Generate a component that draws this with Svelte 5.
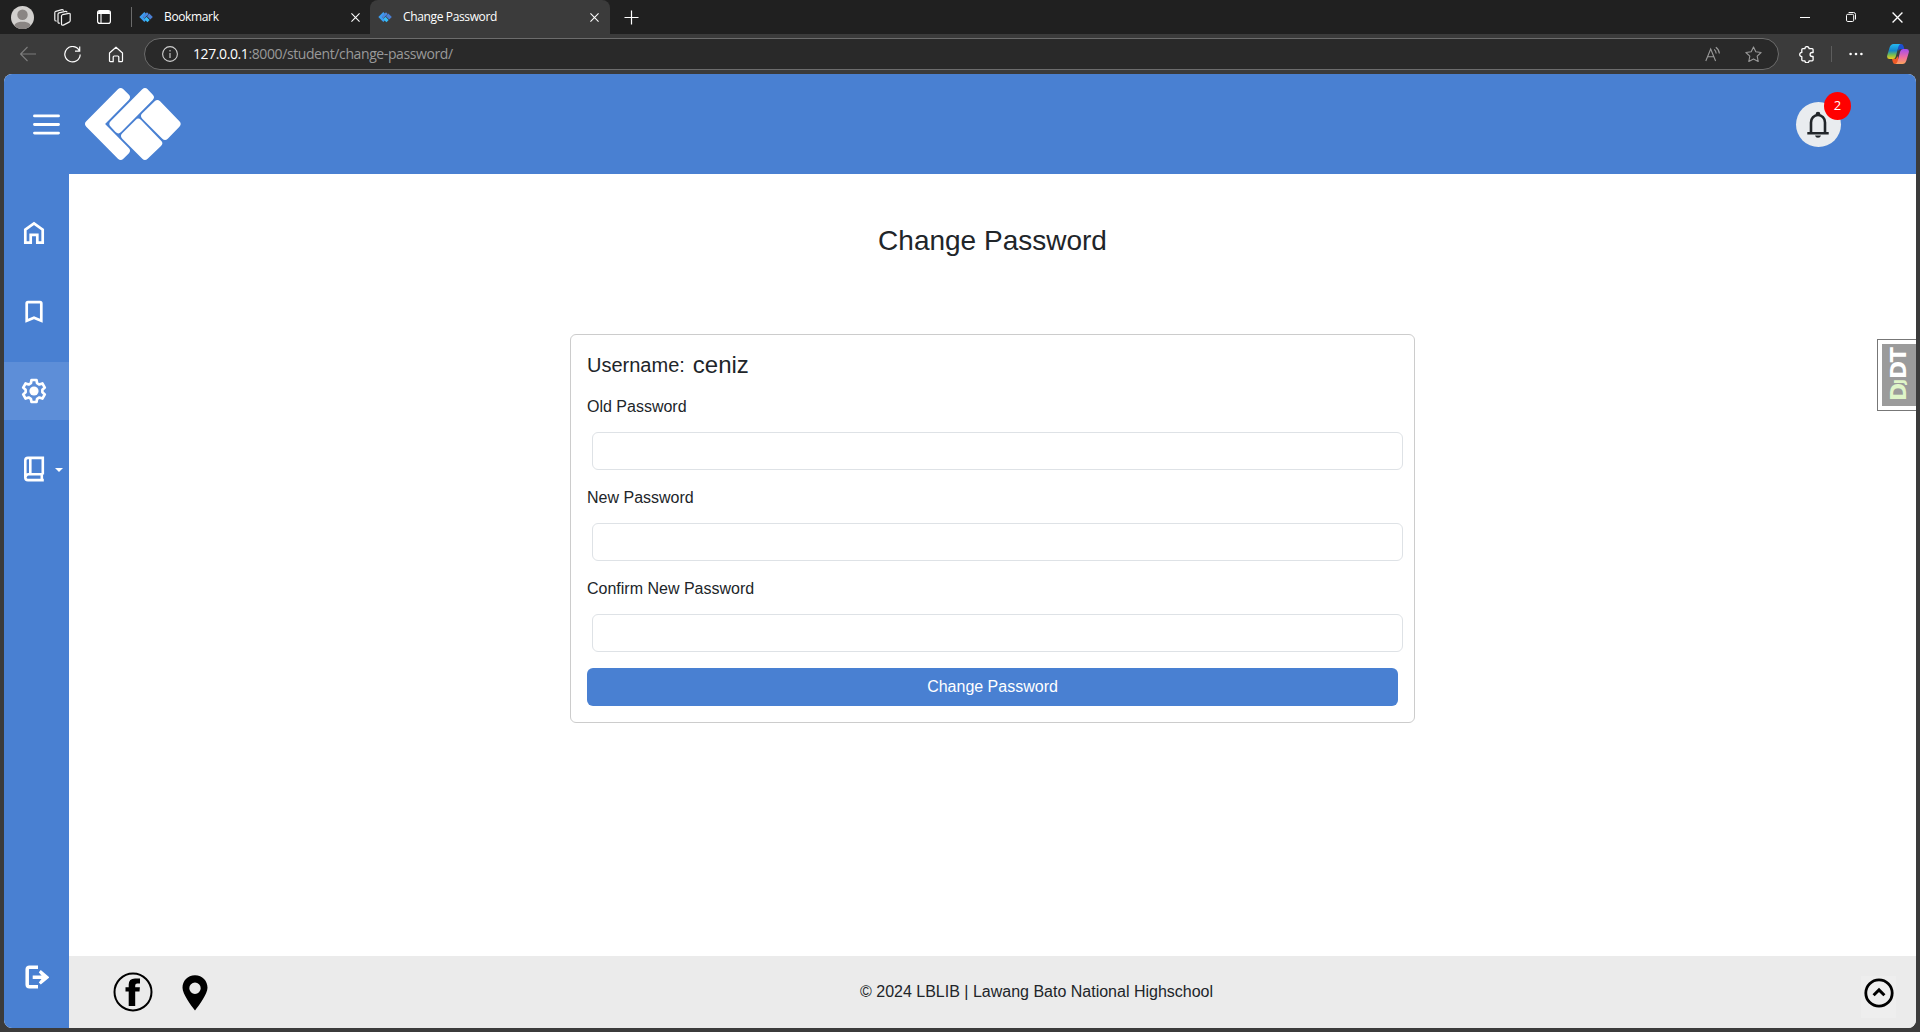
<script>
  const fields = ['Old Password', 'New Password', 'Confirm New Password'];
</script>

{#snippet favicon()}
  <svg class="favicon" viewBox="0 0 14 12" width="14" height="12">
    <path d="M0.3 6 5.3 1 7 2.7 4 6 7 9.3 5.3 11z" fill="#3c9df0" />
    <path d="M3.6 5.8 8 1.300 9.700 3 5.200 7.400z" fill="#4b86dc" />
    <path d="M10.300 2.600 13.800 6 11.300 8.600 7.900 5.200z" fill="#4b7fd3" />
    <path d="M7.500 5.800 10.700 9 8.400 11.200 5.300 8z" fill="#35bcf8" />
  </svg>
{/snippet}

{#snippet cross(size)}
  <svg viewBox="0 0 10 10" width={size} height={size} fill="none" stroke="#fff" stroke-width="1.200">
    <path d="M.5 .5 9.5 9.5M9.5 .5 .5 9.5" />
  </svg>
{/snippet}

<div class="browser">
  <div class="tabs">
    <div class="slot w44">
      <svg viewBox="0 0 22 22" width="23" height="23">
        <defs><clipPath id="face"><circle cx="11" cy="11" r="11" /></clipPath></defs>
        <g clip-path="url(#face)">
          <rect width="22" height="22" fill="#d2d0ce" />
          <circle cx="11" cy="8.400" r="5" fill="#8a8583" />
          <path d="M2.500 22c0-5 2.500-7 8.500-7s8.500 2 8.500 7z" fill="#8a8583" />
        </g>
      </svg>
    </div>
    <div class="slot w36">
      <svg viewBox="0 0 17 17" width="17" height="17" fill="none" stroke="#f2f2f2" stroke-width="1.200" stroke-linecap="round" stroke-linejoin="round">
        <path d="M8.500 5.700 14.800 4.300Q16.200 4.100 16.200 5.400V11.500Q16.200 12.600 15.200 13.100L9.300 16.100Q7.500 16.600 7.500 15V7Q7.500 6 8.500 5.700z" />
        <path d="M5.500 14.200Q4 14.400 4 13V5.300Q4 4.200 5 3.900L11.500 2.300Q12.700 2.200 13 3" />
        <path d="M2.300 12Q.8 12 .8 10.700V3.700Q.8 2.700 1.800 2.300L8 .7Q9 .6 9.300 1.300" />
      </svg>
    </div>
    <div class="slot w48">
      <svg viewBox="0 0 14 14" width="14" height="14">
        <rect x=".6" y=".6" width="12.800" height="12.800" rx="2.200" fill="none" stroke="#fff" stroke-width="1.200" />
        <path d="M1 2.500 2 1h10l1 1.500V4H1z" fill="#fff" />
        <path d="M4 4v9" stroke="#fff" stroke-width="1.100" />
      </svg>
    </div>
    <div class="slot w6"><span class="divider"></span></div>
    <div class="tab">
      {@render favicon()}
      <span class="tab-title">Bookmark</span>
      {@render cross(9)}
    </div>
    <div class="tab active">
      {@render favicon()}
      <span class="tab-title">Change Password</span>
      {@render cross(9)}
    </div>
    <div class="slot w42">
      <svg viewBox="0 0 15 15" width="15" height="15" stroke="#fff" stroke-width="1.200"><path d="M7.500 .5v14M.5 7.500h14" /></svg>
    </div>
    <div class="window-buttons">
      <div class="slot w46"><svg viewBox="0 0 10 10" width="10" height="10"><path d="M0 5.500h10" stroke="#fff" /></svg></div>
      <div class="slot w46">
        <svg viewBox="0 0 10 10" width="10" height="10" fill="none" stroke="#fff">
          <rect x=".5" y="2.300" width="7.200" height="7.200" rx="1.300" />
          <path d="M2.600.5h5Q9.500.5 9.500 2.500v5" />
        </svg>
      </div>
      <div class="slot w46">{@render cross(11)}</div>
    </div>
  </div>

  <div class="toolbar">
    <div class="slot w44">
      <svg viewBox="0 0 16 16" width="16" height="16" fill="none" stroke="#7d7d7d" stroke-width="1.100"><path d="M16 8H.8M7.500 1 .6 8l6.900 7" /></svg>
    </div>
    <div class="slot w44">
      <svg viewBox="0 0 17 17" width="17" height="17" fill="none" stroke="#fff" stroke-width="1.200"><path d="M15.500 5A7.700 7.700 0 1 0 16.200 8.500M15.700 .5V5.200H11" /></svg>
    </div>
    <div class="slot w44">
      <svg viewBox="0 0 16 17" width="16" height="17" fill="none" stroke="#fff" stroke-width="1.200" stroke-linejoin="round"><path d="M1.500 7 8 1.200 14.500 7v7.700q0 1-1 1h-2.700V11q0-1-1-1H6.200q-1 0-1 1v4.700H2.500q-1 0-1-1z" /></svg>
    </div>
    <div class="address">
      <svg viewBox="0 0 16 16" width="16" height="16" fill="none" stroke="#d0d0d0" stroke-width="1.100"><circle cx="8" cy="8" r="7.400" /><path d="M8 7v5M8 4v1.400" /></svg>
      <span class="url"><b>127.0.0.1</b>:8000/student/change-password/</span>
      <svg class="read" viewBox="0 0 16 16" width="16" height="16" fill="none" stroke="#999" stroke-width="1.100">
        <path d="M.8 15 5.700 3l4.900 12M2.500 10.800h6.400M9.200 3.300q1.800 1.500 2 4.200M10.800 1.300q3.200 2.200 3.600 6.200" />
      </svg>
      <svg viewBox="0 0 17 17" width="17" height="17" fill="none" stroke="#999" stroke-width="1.100" stroke-linejoin="round">
        <path d="m8.500 .9 2.300 4.900 5.300.7-3.900 3.700 1 5.300-4.700-2.600-4.700 2.600 1-5.300L.9 6.500l5.300-.7z" />
      </svg>
    </div>
    <div class="slot w48 puzzle">
      <svg viewBox="0 0 16 17" width="16" height="17" fill="none" stroke="#fff" stroke-width="1.300" stroke-linejoin="round">
        <path d="M2.800 3.700q0-1 1-1h2.100a2.100 2.100 0 1 1 4.200 0h3q1 0 1 1v2.800h-1a2 2 0 0 0 0 4h1v3.300q0 1-1 1h-3a2.100 2.100 0 1 1-4.200 0H3.800q-1 0-1-1v-3.200a2.100 2.100 0 1 1 0-4.200z" />
      </svg>
    </div>
    <span class="divider short"></span>
    <div class="slot w48">
      <svg viewBox="0 0 14 4" width="14" height="4" fill="#fff"><circle cx="1.600" cy="2" r="1.300" /><circle cx="7" cy="2" r="1.300" /><circle cx="12.400" cy="2" r="1.300" /></svg>
    </div>
    <div class="slot w36">
      <svg viewBox="0 0 22 20" width="22" height="20">
        <defs>
          <linearGradient id="cool" x1="0" y1="0" x2="0" y2="1"><stop offset="0" stop-color="#25b8f0" /><stop offset=".45" stop-color="#1686c9" /><stop offset=".72" stop-color="#73bd54" /><stop offset="1" stop-color="#f3c91c" /></linearGradient>
          <linearGradient id="warm" x1="0" y1="0" x2="0" y2="1"><stop offset="0" stop-color="#a24cf0" /><stop offset=".55" stop-color="#ee6da0" /><stop offset="1" stop-color="#fca35c" /></linearGradient>
        </defs>
        <path d="M11 0h3q2 0 2.600 2.300L17.300 5h-3q-2.500 0-3 2z" fill="#1c4fd0" />
        <path d="M5 15h3.500l2.500-3v8H8q-1.700 0-2.200-2z" fill="#ee5a26" />
        <path d="M6.500 0h7q-1.500.7-2 2.500L8.800 12.500Q8.200 15 6 15H2.600Q-.7 15 .3 11.200L2.600 3.500Q3.700 0 6.500 0z" fill="url(#cool)" />
        <path d="M15.500 20h-7q1.500-.7 2-2.500L13.200 7.500Q13.800 5 16 5h3.400q3.300 0 2.300 3.800l-2.300 7.700Q18.300 20 15.500 20z" fill="url(#warm)" />
      </svg>
    </div>
  </div>

  <div class="page">
    <header>
      <svg class="burger" viewBox="0 0 27 21" width="27" height="21" stroke="#fff" stroke-width="2.900" stroke-linecap="round"><path d="M1.500 1.900H25.500M1.500 10.500H25.500M1.500 19.100H25.500" /></svg>
      <svg class="logo" viewBox="252 261 294 222" width="98" height="74" fill="#fff" stroke="#fff" stroke-width="23" stroke-linejoin="round">
        <path d="M362 276 378 292 299 372 378 452 362 468 267 372z" />
        <path d="M435 276 450 292 355 388 340 372z" />
        <path d="M472 312 530 372 495 408 435 348z" />
        <path d="M415 368 475 430 435 468 375 408z" />
      </svg>
      <div class="bell">
        <svg viewBox="0 0 22 27" width="22" height="27" fill="none" stroke="#212529" stroke-width="2.600">
          <path d="M.3 22.300H21.700M4 22V11.500a7 7.500 0 0 1 14 0V22" />
          <path d="M8.700 4.500V3a2.300 2.300 0 0 1 4.600 0v1.500zM8 24.500h6q-.5 2.300-3 2.300t-3-2.300z" fill="#212529" stroke="none" />
        </svg>
        <span class="badge">2</span>
      </div>
    </header>

    <div class="body">
      <nav>
        <a class="item" aria-label="Home">
          <svg viewBox="0 0 24 24" width="24" height="24" fill="none" stroke="#fff" stroke-width="2.700"><path d="M3.300 8.700 12 2.400l8.700 6.300v12.900h-5.400v-7.700H8.700v7.700H3.300z" /></svg>
        </a>
        <a class="item" aria-label="Bookmarks">
          <svg viewBox="0 0 24 24" width="24" height="24" fill="none" stroke="#fff" stroke-width="2.700"><path d="M4.700 3.500q0-1.300 1.300-1.300h12q1.300 0 1.300 1.300v17.300L12 17.700l-7.300 3.100z" /></svg>
        </a>
        <a class="item current" aria-label="Settings">
          <svg viewBox="0 0 26 26" width="26" height="26" fill="none" stroke="#fff" stroke-width="2.700" stroke-linejoin="round">
            <path d="M10.500 2h5l.6 3.200 2.200 1.300 3.100-1.100 2.400 4.200-2.400 2.100v2.600l2.400 2.100-2.400 4.200-3.100-1.100-2.200 1.300-.6 3.200h-5l-.6-3.200-2.200-1.300-3.100 1.100-2.400-4.200 2.400-2.100v-2.600L2.200 9.600l2.400-4.200 3.100 1.100 2.200-1.300z" />
            <circle cx="13" cy="13" r="4.600" fill="#fff" stroke="none" />
          </svg>
        </a>
        <a class="item" aria-label="Books">
          <svg viewBox="0 0 24 26" width="24" height="26" fill="none" stroke="#fff" stroke-width="2.600"><path d="M20.800 18.500V1.900H6Q3.300 1.900 3.300 4.500v17Q3.300 24.100 6 24.100h15.800M3.500 21Q4 18.300 6.500 18.300h14.300M19.800 18.500v5.500M8.300 2v16.300" /></svg>
          <span class="caret"></span>
        </a>
        <a class="item logout" aria-label="Log out">
          <svg viewBox="0 0 24 24" width="24" height="24" fill="none" stroke="#fff" stroke-width="3.500"><path d="M13 2.200H4.500Q2.200 2.200 2.200 4.500v15q0 2.300 2.300 2.300H13M7.700 12.300H19" /><path d="M15.800 5 24.500 12.300 15.800 19.600 13.800 17.400 17.800 12.300 13.800 7.200z" fill="#fff" stroke="none" /></svg>
        </a>
      </nav>

      <div class="content">
        <main>
          <h1>Change Password</h1>
          <form>
            <div class="user"><span>Username:</span><strong>ceniz</strong></div>
            {#each fields as label}
              <label>{label}<input type="password" /></label>
            {/each}
            <button type="button">Change Password</button>
          </form>
        </main>
        <footer>
          <svg class="fb" viewBox="0 0 40 40" width="40" height="40">
            <circle cx="20" cy="20" r="18.500" fill="none" stroke="#000" stroke-width="2" />
            <path d="M15.700 34V19.500h-3.200v-4.300h3.200v-2.700q0-6 6.300-6h5v5h-2.800q-2 0-2 2v1.700h4.700l-.4 4.300h-4.300V34z" />
          </svg>
          <svg class="pin" viewBox="0 0 26 36" width="26" height="36"><path fill-rule="evenodd" d="M13 .3C5.500.3.500 6 .5 12.800.5 19 9 30.500 13 35.500 17 30.500 25.500 19 25.500 12.800 25.500 6 20.500.3 13 .3zM13 7.600a5.700 5.700 0 1 1 0 11.400 5.700 5.700 0 1 1 0-11.400z" /></svg>
          <p>© 2024 LBLIB | Lawang Bato National Highschool</p>
          <span class="to-top">
            <svg viewBox="0 0 30 30" width="30" height="30" fill="none" stroke="#000" stroke-width="2.800"><circle cx="15" cy="15" r="13.200" /><path d="M9.600 17.300 15 11.900l5.400 5.400" stroke-width="3" /></svg>
          </span>
        </footer>
      </div>
    </div>

    <div class="debug"><span><i>D<small>J</small></i>DT</span></div>
  </div>
</div>

<style>
  :global(body) { background: #3b3b3b; }
  .browser, .browser * { box-sizing: border-box; }
  .browser {
    width: 1920px; height: 1032px; display: flex; flex-direction: column;
    background: #3b3b3b; overflow: hidden; font-family: 'Liberation Sans', Arial, sans-serif; color: #212529;
  }
  svg { display: block; flex: none; }

  .slot { display: flex; align-items: center; justify-content: center; flex: none; }
  .w6 { width: 6px; } .w36 { width: 36px; } .w42 { width: 42px; } .w44 { width: 44px; } .w46 { width: 46px; } .w48 { width: 48px; }
  .divider { width: 1px; height: 20px; background: #6b6b6b; flex: none; }
  .divider.short { height: 16px; background: #5d5d5d; }

  .tabs { display: flex; height: 34px; background: #202020; flex: none; font-family: 'Open Sans', 'Noto Sans', sans-serif; }
  .tab { display: flex; align-items: center; width: 236px; padding: 0 10px 0 5px; color: #fff; }
  .tab.active { width: 240px; padding: 0 11px 0 8px; background: #3b3b3b; border-radius: 8px 8px 0 0; }
  .tab-title { margin-left: 11px; margin-right: auto; font-size: 12px; line-height: 18px; letter-spacing: -0.36px; white-space: nowrap; padding-bottom: 1px; }
  .window-buttons { display: flex; margin-left: auto; }

  .toolbar { display: flex; align-items: center; height: 40px; padding-left: 6px; flex: none; }
  .address {
    display: flex; align-items: center; width: 1635px; height: 32px; margin-left: 6px; padding: 0 16px 0 17px;
    border: 1px solid #6c6c6c; border-radius: 16px; background: #292929; flex: none;
  }
  .url { margin-left: 15px; margin-right: auto; font: 14px/20px 'Open Sans', 'Noto Sans', sans-serif; color: #999; letter-spacing: -0.4px; white-space: nowrap; }
  .url b { font-weight: 400; color: #fff; }
  .read { margin-right: 24px; }
  .puzzle { margin-left: 4px; }

  .page { position: relative; display: flex; flex-direction: column; width: 1912px; height: 954px; margin: 0 4px; border-radius: 8px; overflow: hidden; background: #fff; }
  header { display: flex; align-items: center; height: 100px; padding-left: 29px; background: #4980d2; flex: none; }
  .burger { margin-top: 1px; }
  .logo { margin-left: 24px; }
  .bell { position: relative; display: flex; align-items: center; justify-content: center; width: 45px; height: 45px; margin-left: auto; margin-right: 75px; padding-right: 1px; border-radius: 50%; background: #e9ecef; margin-top: 1px; }
  .badge {
    position: absolute; left: 28px; top: -10px; width: 27px; height: 28px; border-radius: 50%;
    background: #f00; color: #fff; text-align: center; font: 13px/27px 'Open Sans', sans-serif;
  }

  .body { display: flex; flex: 1; min-height: 0; }
  nav { display: flex; flex-direction: column; gap: 20.8px; width: 65px; padding: 30px 0 22px; background: #4980d2; flex: none; }
  .item { display: flex; align-items: center; height: 58px; padding-left: 17.500px; }
  .item.current { padding-left: 16.500px; background: #5d8ed8; }
  .item.logout { margin-top: auto; padding-left: 20.500px; }
  .caret { margin-left: 9.500px; border: 4px solid transparent; border-top-color: #fff; border-bottom: 0; margin-top: 2px; }

  .content { display: flex; flex-direction: column; flex: 1; }
  main { display: flex; flex-direction: column; align-items: center; flex: 1; }
  h1 { margin: 50px 0 0; font-size: 28px; line-height: 34px; font-weight: 400; }
  form { display: flex; flex-direction: column; width: 845px; height: 389px; margin-top: 76px; padding: 15px 16px; border: 1px solid #ccc; border-radius: 6px; }
  .user { display: flex; align-items: center; height: 29px; gap: 8px; font-size: 20px; line-height: 28px; }
  .user strong { font-size: 24px; font-weight: 400; }
  label { display: block; height: 91px; padding-top: 16px; font-size: 16px; line-height: 24px; }
  input { display: block; width: 811px; height: 38px; margin: 13px 0 0 5px; border: 1px solid #dee2e6; border-radius: 6px; background: #fff; }
  button { height: 38px; margin-top: 16px; border: 0; border-radius: 6px; background: #4980d2; color: #fff; font: 16px/24px 'Liberation Sans', Arial, sans-serif; flex: none; }

  footer { display: flex; align-items: center; height: 72px; padding: 0 20px 0 44px; background: #ebebeb; flex: none; }
  .pin { margin-left: 29px; margin-top: 1px; }
  footer p { margin: 0 auto 0 652px; font-size: 16px; line-height: 24px; white-space: nowrap; }
  .to-top { display: flex; justify-content: center; width: 35px; height: 42px; padding-top: 2px; margin-top: 10px; background: #eee; }

  .debug {
    position: absolute; right: 0; top: 265px; width: 39px; height: 72px; padding: 4px 0 4px 4px;
    border: 1px solid #777; border-right: 0; background: #fff;
  }
  .debug span {
    display: flex; align-items: center; justify-content: center; width: 34px; height: 62px; background: #9b9b9b; color: #fff;
    writing-mode: vertical-rl; transform: rotate(180deg); font: 700 22px/34px 'DejaVu Sans', sans-serif; letter-spacing: -1.600px;
  }
  .debug i { font-style: normal; color: #dff5c8; }
  .debug small { font-size: 14px; letter-spacing: 0; }
</style>
